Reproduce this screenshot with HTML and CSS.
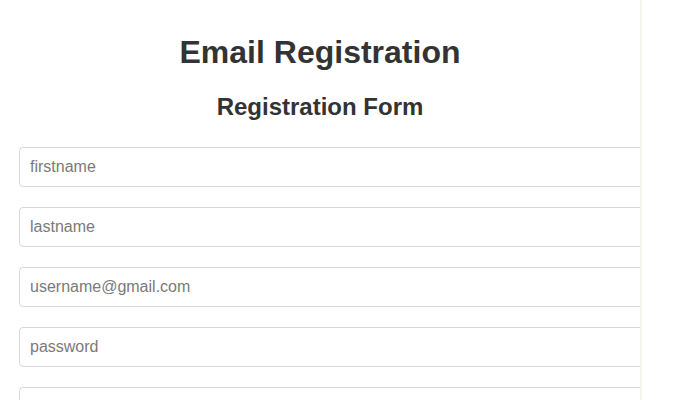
FILE: index.html
```html
<!DOCTYPE html>
<html>
<head>
<meta charset="utf-8">
<link rel="stylesheet" href="styles.css">
</head>
<body>
<div class="frame">
  <h1 class="title">Email Registration</h1>
  <h2 class="subtitle">Registration Form</h2>
  <form class="form">
    <input class="field" type="text" placeholder="firstname">
    <input class="field" type="text" placeholder="lastname">
    <input class="field" type="email" placeholder="username@gmail.com">
    <input class="field" type="password" placeholder="password">
    <input class="field" type="text" placeholder="">
  </form>
</div>
</body>
</html>
```
FILE: styles.css
```css
html, body {
  margin: 0;
  padding: 0;
  background: #fff;
}
body {
  font-family: "Liberation Sans", Arial, sans-serif;
  color: #333;
}
.frame {
  width: 640px;
  height: 400px;
  overflow: hidden;
  border-right: 2px solid #f4f4ea;
  box-sizing: content-box;
}
.title {
  margin: 0;
  padding-top: 34px;
  font-size: 32px;
  line-height: 36px;
  font-weight: bold;
  text-align: center;
  color: #333;
}
.subtitle {
  margin: 23px 0 0;
  font-size: 24px;
  line-height: 28px;
  font-weight: bold;
  text-align: center;
  color: #333;
}
.form {
  display: flex;
  flex-direction: column;
  gap: 20px;
  margin-top: 26px;
  padding-left: 19px;
}
.field {
  width: 700px;
  height: 40px;
  box-sizing: border-box;
  border: 1px solid #d8d8d8;
  border-radius: 4px;
  padding: 0 10px;
  font-family: "Liberation Sans", Arial, sans-serif;
  font-size: 16px;
  color: #555;
  background: #fff;
  outline: none;
}
.field::placeholder {
  color: #7a7a7a;
}
```
